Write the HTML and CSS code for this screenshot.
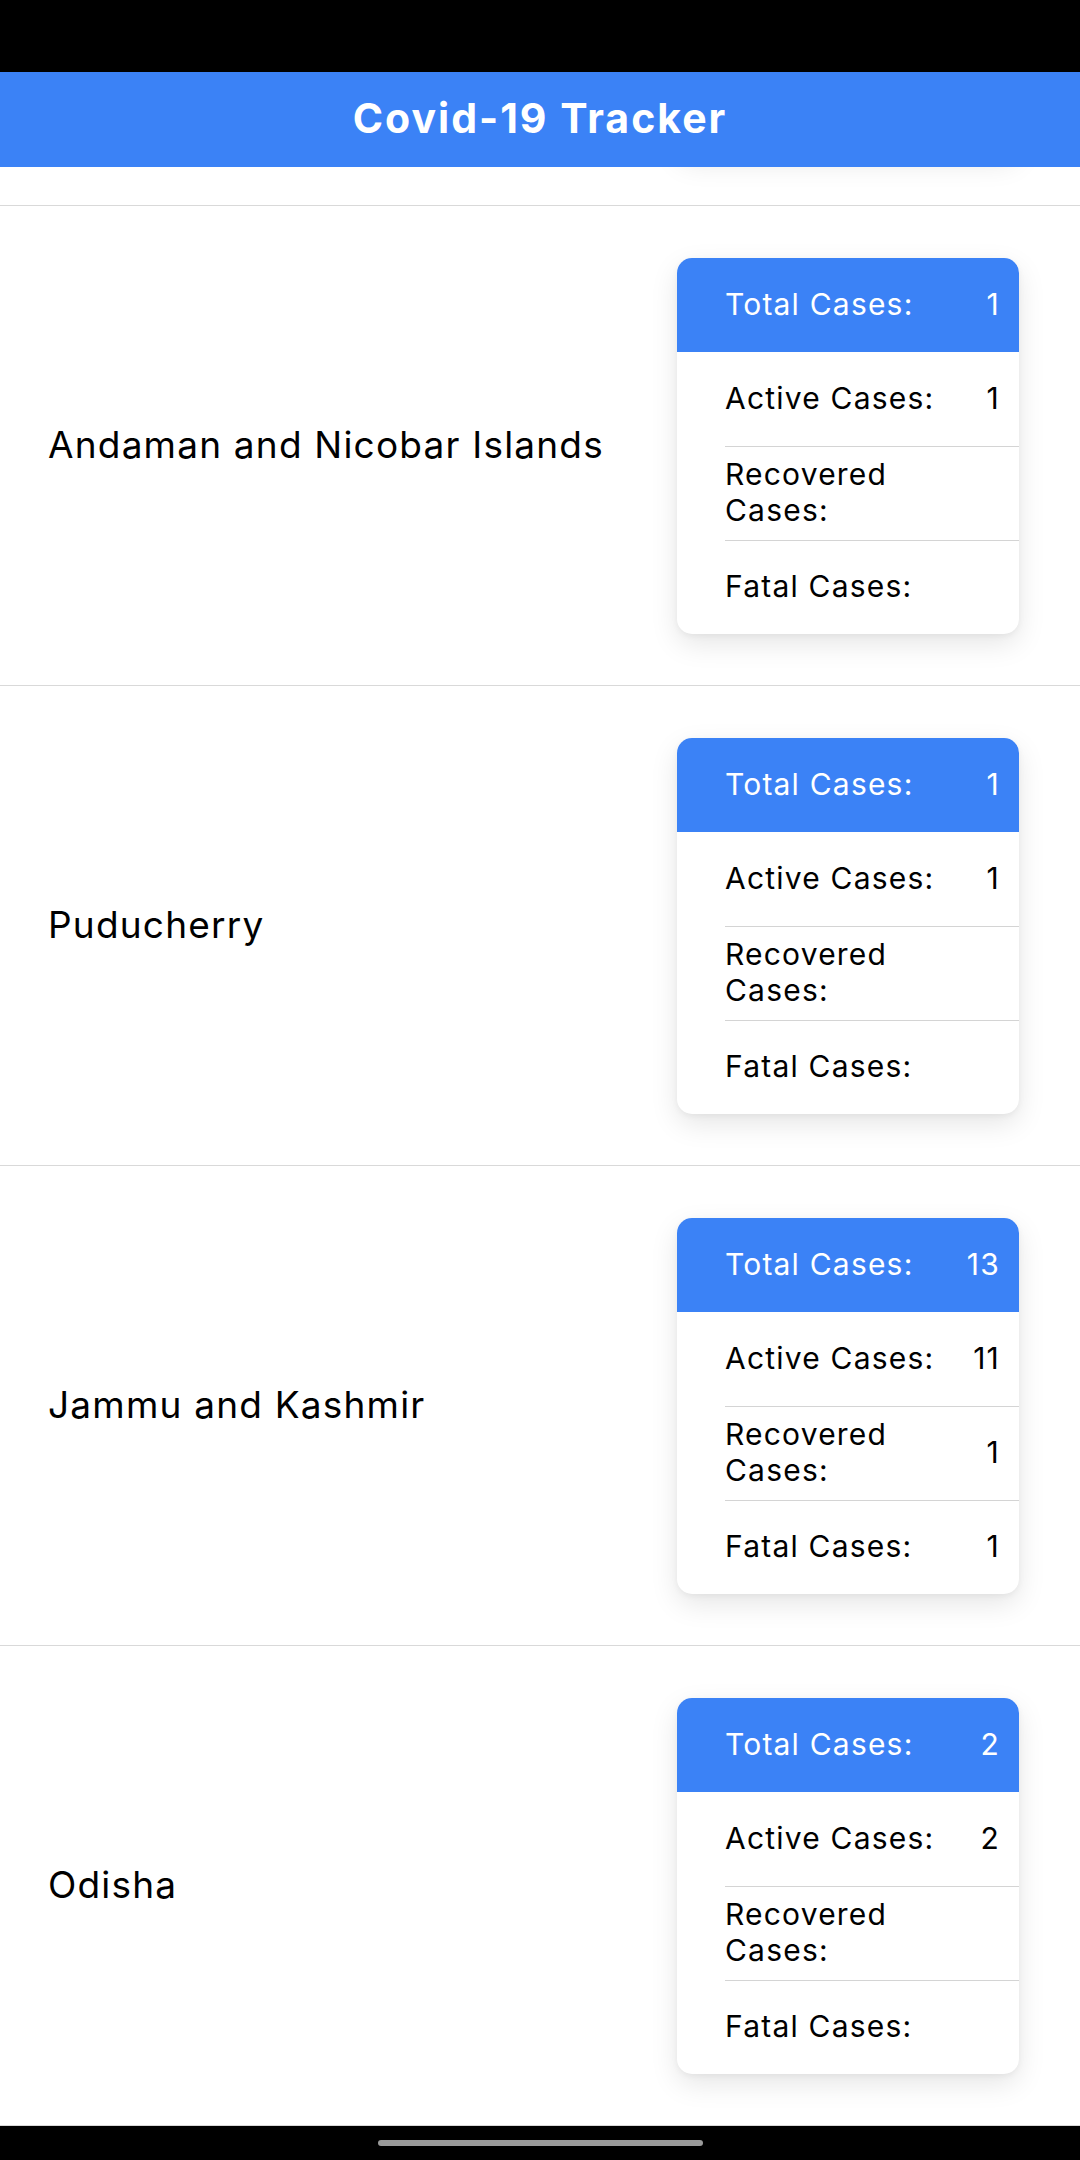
FILE: index.html
```html
<!DOCTYPE html>
<html lang="en">
<head>
<meta charset="utf-8">
<title>Covid-19 Tracker</title>
<link rel="stylesheet" href="styles.css">
</head>
<body>
<div class="screen">
  <div class="status-bar"></div>
  <header class="app-bar"><h1 class="app-title">Covid-19 Tracker</h1></header>
  <main class="viewport">
    <ul class="state-list">
      <li class="state-row state-row-peek" aria-hidden="true">
        <div class="stats-card card-stub"></div>
      </li>
      <li class="state-row">
        <span class="state-name">Andaman and Nicobar Islands</span>
        <div class="stats-card">
          <div class="stat stat-total"><span class="stat-label">Total Cases:</span><span class="stat-value">1</span></div>
          <div class="stat"><span class="stat-label">Active Cases:</span><span class="stat-value">1</span></div>
          <div class="stat"><span class="stat-label">Recovered Cases:</span><span class="stat-value"></span></div>
          <div class="stat"><span class="stat-label">Fatal Cases:</span><span class="stat-value"></span></div>
        </div>
      </li>
      <li class="state-row">
        <span class="state-name">Puducherry</span>
        <div class="stats-card">
          <div class="stat stat-total"><span class="stat-label">Total Cases:</span><span class="stat-value">1</span></div>
          <div class="stat"><span class="stat-label">Active Cases:</span><span class="stat-value">1</span></div>
          <div class="stat"><span class="stat-label">Recovered Cases:</span><span class="stat-value"></span></div>
          <div class="stat"><span class="stat-label">Fatal Cases:</span><span class="stat-value"></span></div>
        </div>
      </li>
      <li class="state-row">
        <span class="state-name">Jammu and Kashmir</span>
        <div class="stats-card">
          <div class="stat stat-total"><span class="stat-label">Total Cases:</span><span class="stat-value">13</span></div>
          <div class="stat"><span class="stat-label">Active Cases:</span><span class="stat-value">11</span></div>
          <div class="stat"><span class="stat-label">Recovered Cases:</span><span class="stat-value">1</span></div>
          <div class="stat"><span class="stat-label">Fatal Cases:</span><span class="stat-value">1</span></div>
        </div>
      </li>
      <li class="state-row">
        <span class="state-name">Odisha</span>
        <div class="stats-card">
          <div class="stat stat-total"><span class="stat-label">Total Cases:</span><span class="stat-value">2</span></div>
          <div class="stat"><span class="stat-label">Active Cases:</span><span class="stat-value">2</span></div>
          <div class="stat"><span class="stat-label">Recovered Cases:</span><span class="stat-value"></span></div>
          <div class="stat"><span class="stat-label">Fatal Cases:</span><span class="stat-value"></span></div>
        </div>
      </li>
    </ul>
  </main>
  <div class="nav-bar"><span class="home-pill"></span></div>
</div>
</body>
</html>
```

FILE: styles.css
```css
* { box-sizing: border-box; }
html, body { margin: 0; padding: 0; background: #ffffff; }
body { font-family: Inter, "Noto Sans", sans-serif; color: #000; }

.screen {
  width: 1080px;
  height: 2160px;
  display: flex;
  flex-direction: column;
  overflow: hidden;
}

.status-bar { height: 72px; background: #000; flex: none; }

.app-bar {
  height: 95px;
  flex: none;
  background: #3b82f6;
  display: flex;
  align-items: center;
  justify-content: center;
}
.app-title {
  margin: 0 0 3px 0;
  color: #fff;
  font-family: Inter, Roboto, sans-serif;
  font-weight: 700;
  font-size: 41px;
  line-height: 1;
  letter-spacing: 2px;
}

.viewport {
  flex: 1;
  overflow: hidden;
  background: #fff;
}

.state-list {
  list-style: none;
  margin: 0;
  padding: 0;
}

.state-row {
  height: 480px;
  border-bottom: 1px solid #d9d9d9;
  display: flex;
  align-items: center;
  justify-content: space-between;
  padding: 0 61px 0 48px;
}

.state-row-peek {
  height: 39px;
  overflow: hidden;
  align-items: flex-end;
  justify-content: flex-end;
}
.card-stub {
  height: 120px;
  margin-bottom: 52px;
  flex: none;
}

.state-name {
  font-family: Inter, "Noto Sans", sans-serif;
  font-size: 37px;
  color: #000;
  letter-spacing: 1.2px;
  margin-bottom: 2px;
}

.stats-card {
  width: 342px;
  background: #fff;
  border-radius: 15px;
  overflow: hidden;
  box-shadow: 0 10px 28px rgba(0, 0, 0, 0.10), 0 2px 6px rgba(0, 0, 0, 0.05);
  font-family: Inter, "Noto Sans", sans-serif;
  font-size: 30px;
  letter-spacing: 1.2px;
}

.stat {
  height: 94px;
  display: flex;
  align-items: center;
  margin-left: 48px;
  padding-right: 19px;
  padding-bottom: 2px;
  color: #000;
}
.stat + .stat { border-top: 1px solid #d4d4d4; }
.stat-total + .stat { border-top: none; }

.stat-total {
  margin-left: 0;
  padding-left: 48px;
  background: #3b82f6;
  color: #fff;
}

.stat-label {
  width: 222px;
  line-height: 36px;
}
.stat-value {
  flex: 1;
  text-align: right;
}

.nav-bar {
  height: 34px;
  flex: none;
  background: #000;
  display: flex;
  justify-content: center;
  align-items: center;
}
.home-pill {
  width: 325px;
  height: 6px;
  border-radius: 3px;
  background: #9a9a9a;
}
```
